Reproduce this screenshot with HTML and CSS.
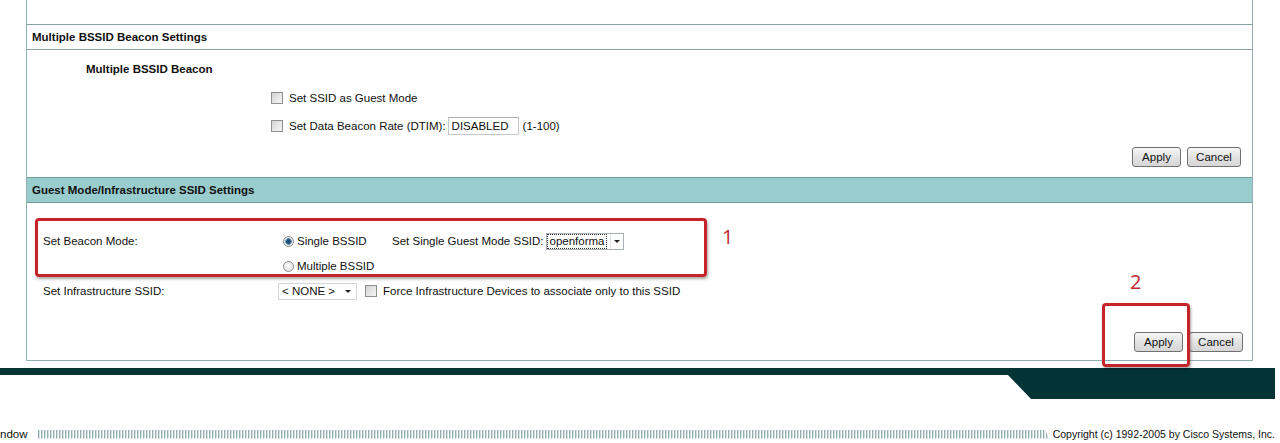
FILE: index.html
```html
<!DOCTYPE html>
<html>
<head>
	<meta charset="utf-8">
	<title>Guest Mode/Infrastructure SSID Settings</title>
	<link rel="stylesheet" href="styles.css">
</head>
<body>
	<div class="panel">
		<div class="prev"></div>
		<div class="section-head">Multiple BSSID Beacon Settings</div>
		<div class="section-body beacon">
			<div class="title-row">Multiple BSSID Beacon</div>
			<div class="opt-row"><input type="checkbox" class="check">Set SSID as Guest Mode</div>
			<div class="opt-row second"><input type="checkbox" class="check">Set Data Beacon Rate (DTIM):<input type="text" class="textbox" value="DISABLED">(1-100)</div>
			<div class="buttons"><button class="btn apply">Apply</button><button class="btn cancel">Cancel</button></div>
		</div>
		<div class="section-head teal">Guest Mode/Infrastructure SSID Settings</div>
		<div class="section-body guest">
			<div class="form-grid">
				<div class="label">Set Beacon Mode:</div>
				<div class="field">
					<span class="radio-cell"><input type="radio" name="mode" class="radio" checked>Single BSSID</span>
					<span class="ssid-label">Set Single Guest Mode SSID:</span>
					<span class="select ssid"><span class="focus">openforma</span><span class="arrow"></span></span>
				</div>
				<div class="label"></div>
				<div class="field"><span class="radio-cell"><input type="radio" name="mode" class="radio">Multiple BSSID</span></div>
				<div class="label">Set Infrastructure SSID:</div>
				<div class="field">
					<span class="select none">&lt; NONE &gt;<span class="arrow"></span></span>
					<input type="checkbox" class="check force">Force Infrastructure Devices to associate only to this SSID
				</div>
			</div>
			<div class="buttons"><button class="btn apply">Apply</button><button class="btn cancel">Cancel</button></div>
		</div>
	</div>
	<div class="band"></div>
	<div class="footer">
		<span class="close">ndow</span>
		<span class="stripes"></span>
		<span class="copyright">Copyright (c) 1992-2005 by Cisco Systems, Inc.</span>
	</div>

	<!-- annotations drawn over the screenshot -->
	<div class="mark mark-one"></div>
	<div class="mark-num num-one">1</div>
	<div class="mark mark-two"></div>
	<div class="mark-num num-two">2</div>
</body>
</html>
```

FILE: styles.css
```css
html{background: #fff;}
body{margin: 0; width: 1280px; height: 443px; overflow: hidden; position: relative; font-family: "Liberation Sans", Arial, sans-serif; font-size: 11.5px; color: #111;}

.panel{margin-left: 26px; width: 1227px; box-sizing: border-box; border-left: 1px solid #93aeae; border-right: 1px solid #93aeae; border-bottom: 1px solid #93aeae;}
.prev{height: 24px;}
.section-head{height: 24px; line-height: 24px; padding-left: 5px; border-top: 1px solid #86a3a3; border-bottom: 1px solid #86a3a3; font-weight: bold; background: #fff;}
.section-head.teal{background: #99cccc; border-color: #6f9c9c;}

.beacon{padding-bottom: 10px;}
.title-row{height: 38px; line-height: 38px; padding-left: 59px; font-weight: bold;}
.opt-row{height: 20px; display: flex; align-items: center; padding-left: 244px;}
.opt-row.second{margin-top: 8px;}

.check{appearance: none; -webkit-appearance: none; margin: 0 6px 0 0; width: 12px; height: 12px; box-sizing: border-box; border: 1px solid #8e8f8f; background: linear-gradient(135deg, #d4d4d4, #f6f6f6); border-radius: 0;}
.check.force{margin-left: 8px;}
.radio{appearance: none; -webkit-appearance: none; margin: 0 3px 0 5px; width: 11px; height: 11px; box-sizing: border-box; border: 1px solid #8e8f8f; border-radius: 50%; background: radial-gradient(circle at 50% 40%, #fff, #d8d8d8);}
.radio:checked{background: radial-gradient(circle, #1d4f78 0 2px, #5b8fb5 2.5px 3px, #e6e6e6 3.5px);}

.textbox{margin: 0 4px 0 2px; width: 71px; height: 18px; box-sizing: border-box; border: 1px solid #c4c7cc; border-top-color: #abadb3; padding: 0 3px; font: inherit; color: #111; outline: none;}

.buttons{display: flex; justify-content: flex-end; gap: 6px; margin-top: 11px; padding-right: 11px;}
.btn{height: 20px; padding: 0; box-sizing: border-box; border: 1px solid #707070; border-radius: 3px; background: linear-gradient(#f6f6f6, #e3e3e3 50%, #d6d6d6); font: inherit; color: #111;}
.btn.apply{width: 49px;}
.btn.cancel{width: 54px;}

.guest{padding-top: 28px; padding-bottom: 8px;}
.guest .buttons{margin-top: 31px; padding-right: 9px;}
.form-grid{display: grid; grid-template-columns: 235px 1fr; grid-auto-rows: 20px; row-gap: 5px; padding-left: 16px;}
.form-grid .label, .form-grid .field{display: flex; align-items: center;}
.radio-cell{display: inline-flex; align-items: center; width: 114px;}
.ssid-label{margin-right: 2px;}

.select{position: relative; display: inline-flex; align-items: center; height: 17px; box-sizing: border-box; border: 1px solid #a9afb6; background: #fff;}
.select .arrow{position: absolute; right: 0; top: 0; bottom: 0; width: 12px;}
.select .arrow:after{content: ""; position: absolute; left: 3px; top: 6px; border-left: 3px solid transparent; border-right: 3px solid transparent; border-top: 3px solid #222;}
.select.ssid{width: 78px; padding-left: 1px;}
.select.ssid .focus{padding: 0 2px; line-height: 13px; outline: 1px dotted #333; margin-right: 14px;}
.select.ssid .arrow{border-left: 1px solid #e1e3e6;}
.select.none{width: 79px; padding-left: 3px; border-color: #d3d6da;}
.select.none .arrow{right: 2px;}

.band{margin-top: 7px; width: 1275px; height: 31px; background: #023435; clip-path: polygon(0 0, 100% 0, 100% 100%, 1031px 100%, 1008px 7px, 0 7px);}

.footer{display: flex; align-items: center; width: 1275px; height: 14px; margin-top: 28px; font-size: 10.5px;}
.close{font-size: 11.5px;}
.stripes{flex: 1; height: 9px; margin: 0 3px 0 10px; background: repeating-linear-gradient(90deg, #94afaf 0 1px, #d3dfdf 1px 2px, #fff 2px 3px); clip-path: polygon(0 0, calc(100% - 5px) 0, 100% 100%, 0 100%);}

.mark{position: absolute; border: 3px solid #c5242b; border-radius: 4px; box-sizing: border-box; box-shadow: 1px 2px 3px rgba(0,0,0,.35);}
.mark-one{left: 35px; top: 218px; width: 672px; height: 59px;}
.mark-two{left: 1102px; top: 303px; width: 88px; height: 64px;}
.mark-num{position: absolute; font-family: "Open Sans", "Liberation Sans", sans-serif; font-size: 20px; line-height: 20px; color: #c0282d;}
.num-one{left: 722px; top: 227px;}
.num-two{left: 1130px; top: 272px;}
```
